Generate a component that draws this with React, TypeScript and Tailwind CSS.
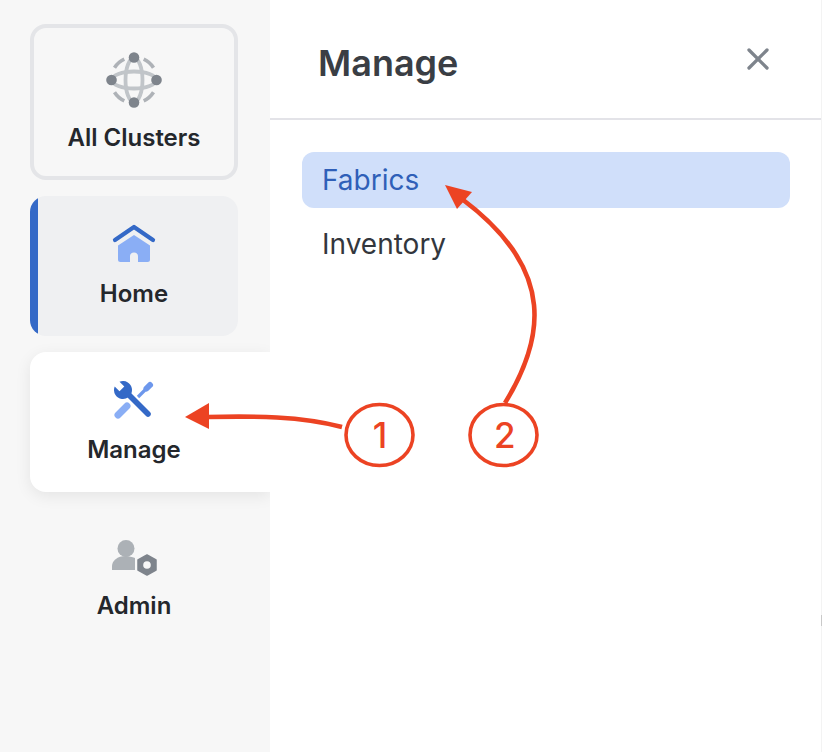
import { X } from "lucide-react";

function ClustersIcon() {
  return (
    <svg width="56" height="56" viewBox="0 0 56 56" fill="none">
      {/* outer dashes */}
      <g stroke="#aeb2b7" strokeWidth="3.6">
        <path d="M8.5 15.8 A23 23 0 0 1 18.3 7.2" />
        <path d="M37.7 7.2 A23 23 0 0 1 47.5 15.8" />
        <path d="M47.5 40.2 A23 23 0 0 1 37.7 48.8" />
        <path d="M18.3 48.8 A23 23 0 0 1 8.5 40.2" />
      </g>
      {/* globe lines */}
      <g stroke="#c1c5c9" strokeWidth="3.8">
        <ellipse cx="28" cy="28" rx="8.5" ry="22" />
        <ellipse cx="28" cy="28" rx="22" ry="8.5" />
      </g>
      <g fill="#7e848c">
        <circle cx="28" cy="5.5" r="5.3" />
        <circle cx="28" cy="50.5" r="5.3" />
        <circle cx="5.5" cy="28" r="5.3" />
        <circle cx="50.5" cy="28" r="5.3" />
      </g>
    </svg>
  );
}

function HomeIcon() {
  return (
    <svg width="44" height="38" viewBox="0 0 44 38" fill="none">
      <path
        d="M3 16 L22 3 L41 16"
        stroke="#3469c7"
        strokeWidth="4.2"
        strokeLinecap="round"
        strokeLinejoin="round"
      />
      <path
        d="M22 11 L38 21.5 V35.5 a2.5 2.5 0 0 1 -2.5 2.5 H26 V32.5 a4 4 0 0 0 -8 0 V38 H8.5 A2.5 2.5 0 0 1 6 35.5 V21.5 Z"
        fill="#8aaef5"
      />
    </svg>
  );
}

function ToolsIcon() {
  return (
    <svg width="42" height="40" viewBox="0 0 42 40" fill="none">
      <path d="M25 17 L34 8" stroke="#6d97ec" strokeWidth="3.2" />
      <path d="M33.5 8.5 L37 5" stroke="#6d97ec" strokeWidth="6" strokeLinecap="round" />
      <path d="M5 35 L14 26" stroke="#8aaef5" strokeWidth="7" strokeLinecap="round" />
      <path d="M14 13 L35 34" stroke="#3469c7" strokeWidth="5.6" strokeLinecap="round" />
      <path
        d="M6.5 1.7 L11.3 6.5 L6.5 11.3 L1.7 6.5 A9 9 0 1 0 6.5 1.7 Z"
        fill="#3469c7"
      />
    </svg>
  );
}

function AdminIcon() {
  return (
    <svg width="46" height="36" viewBox="0 0 46 36" fill="none">
      <circle cx="15" cy="8.5" r="8.5" fill="#acb1b6" />
      <path d="M1 30 V26 C1 21 6 16 15 16 C18 16 21 17 24 18 V30 Z" fill="#acb1b6" />
      <path d="M36 15 L45 20 V30 L36 35 L27 30 V20 Z" fill="#7e848c" stroke="#7e848c" strokeWidth="1.5" strokeLinejoin="round" />
      <circle cx="36" cy="25" r="3.8" fill="#f7f7f7" />
    </svg>
  );
}

function Annotations() {
  return (
    <div className="pointer-events-none absolute inset-0 z-20">
      <svg width="822" height="752" viewBox="0 0 822 752" fill="none" className="absolute inset-0">
        <path d="M342 427 C 300 416, 255 416, 207 417" stroke="#ec4323" strokeWidth="4.6" />
        <path d="M185 417 L209 403 L209 429 Z" fill="#ec4323" />
        <path d="M505 403 C 527 367, 537 335, 534 305 C 530 262, 498 226, 462 199" stroke="#ec4323" strokeWidth="4.6" />
        <path d="M445 185 L472 192 L457 209 Z" fill="#ec4323" />
        <ellipse cx="379.5" cy="435" rx="33.5" ry="30.5" stroke="#ec4323" strokeWidth="3.6" />
        <ellipse cx="503.5" cy="435" rx="33.5" ry="30.5" stroke="#ec4323" strokeWidth="3.6" />
      </svg>
      <span className="absolute top-[414px] left-[370px] w-5 text-center text-[35px] leading-[42px] font-medium text-[#ec4323]">1</span>
      <span className="absolute top-[414px] left-[494px] w-5 text-center text-[35px] leading-[42px] font-medium text-[#ec4323]">2</span>
    </div>
  );
}

export default function App() {
  return (
    <div className="relative flex h-[752px] w-[822px] overflow-hidden bg-white font-['Inter',sans-serif] text-[#24272c]">
      {/* sidebar */}
      <div className="flex w-[270px] shrink-0 flex-col gap-4 bg-[#f7f7f7] pt-6 pl-[30px]">
        <div className="flex h-[156px] w-[208px] flex-col items-center gap-4 rounded-2xl border-4 border-[#e4e5e8] pt-[24px]">
          <ClustersIcon />
          <span className="text-[24px] leading-[28px] font-semibold">All Clusters</span>
        </div>

        <div className="flex h-[140px] w-[208px] overflow-hidden rounded-2xl bg-[#eff0f2]">
          <div className="w-2 shrink-0 bg-[#3469c7]" />
          <div className="flex flex-1 flex-col items-center gap-[18px] pt-7 pr-2">
            <HomeIcon />
            <span className="text-[24px] leading-[28px] font-semibold">Home</span>
          </div>
        </div>

        <div className="flex h-[140px] w-[240px] flex-col items-center gap-4 rounded-l-2xl bg-white pt-7 pr-8 shadow-[0_4px_16px_rgba(0,0,0,0.08)]">
          <ToolsIcon />
          <span className="text-[24px] leading-[28px] font-semibold">Manage</span>
        </div>

        <div className="flex h-[140px] w-[208px] flex-col items-center gap-4 pt-8">
          <AdminIcon />
          <span className="text-[24px] leading-[28px] font-semibold">Admin</span>
        </div>
      </div>

      {/* panel */}
      <div className="relative z-10 flex-1 border-r border-[#f3f3f3] bg-white">
        <div className="flex h-[120px] items-center justify-between border-b-2 border-[#e3e3e8] pr-[45px] pl-12">
          <h2 className="mt-2 text-[36px] font-semibold text-[#3a3e44]">Manage</h2>
          <X size={36} strokeWidth={2.2} className="text-[#7e848c]" />
        </div>
        <div className="flex flex-col gap-2 pt-[32px] pr-[31px] pl-8">
          <div className="flex h-14 items-center rounded-xl bg-[#d0dffa] px-5 text-[28px] text-[#2f5fb8]">Fabrics</div>
          <div className="flex h-14 items-center px-5 text-[28px] text-[#33373d]">Inventory</div>
        </div>
        <div className="absolute top-[615px] right-[-1px] h-[11px] w-px bg-[#c9c9c9]" />
      </div>

      <Annotations />
    </div>
  );
}
